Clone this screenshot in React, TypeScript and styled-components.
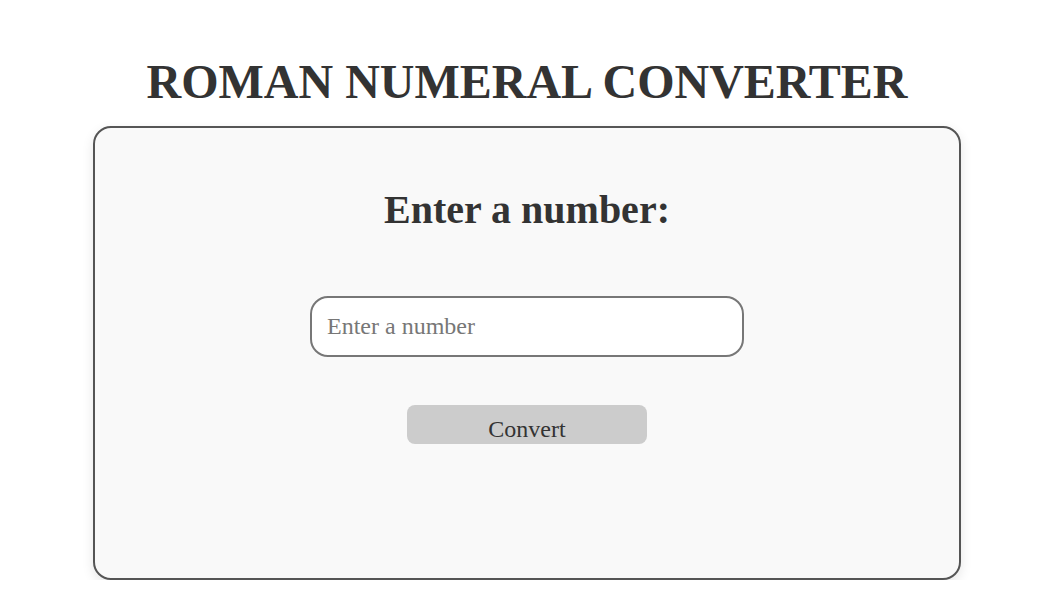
import React from "react";
import styled, { createGlobalStyle } from "styled-components";

const Global = createGlobalStyle`
  html, body { margin: 0; padding: 0; background: #ffffff; }
  body { font-family: "Liberation Serif", "Times New Roman", serif; color: #333; }
`;

const Page = styled.main`
  display: flex;
  flex-direction: column;
  align-items: center;
  padding-top: 56px;
  padding-left: 4px;
`;

const Title = styled.h1`
  margin: 0 0 18px;
  font-size: 48px;
  font-weight: 700;
  color: #333;
  line-height: 52px;
`;

const Card = styled.section`
  box-sizing: border-box;
  width: 868px;
  height: 454px;
  background: #f9f9f9;
  border: 2px solid #555;
  border-radius: 18px;
  box-shadow: 0 4px 12px rgba(0, 0, 0, 0.1);
  display: flex;
  flex-direction: column;
  align-items: center;
  padding-top: 58px;
`;

const Heading = styled.h2`
  margin: 0 0 62px;
  font-size: 40px;
  font-weight: 700;
  line-height: 48px;
  color: #333;
`;

const Input = styled.input`
  box-sizing: border-box;
  width: 434px;
  height: 61px;
  border: 2px solid #777;
  border-radius: 18px;
  background: #fff;
  padding: 0 15px;
  font-family: "Liberation Serif", "Times New Roman", serif;
  font-size: 24px;
  color: #333;
  outline: none;
  &::placeholder { color: #777; }
`;

const Button = styled.button`
  margin-top: 48px;
  width: 240px;
  height: 39px;
  border: none;
  border-radius: 8px;
  background: #ccc;
  color: #333;
  font-family: "Liberation Serif", "Times New Roman", serif;
  font-size: 24px;
  padding: 8px 0 0;
  line-height: 30px;
  cursor: pointer;
`;

export default function App() {
  return (
    <>
      <Global />
      <Page>
        <Title>ROMAN NUMERAL CONVERTER</Title>
        <Card>
          <Heading>Enter a number:</Heading>
          <Input type="number" placeholder="Enter a number" />
          <Button>Convert</Button>
        </Card>
      </Page>
    </>
  );
}
